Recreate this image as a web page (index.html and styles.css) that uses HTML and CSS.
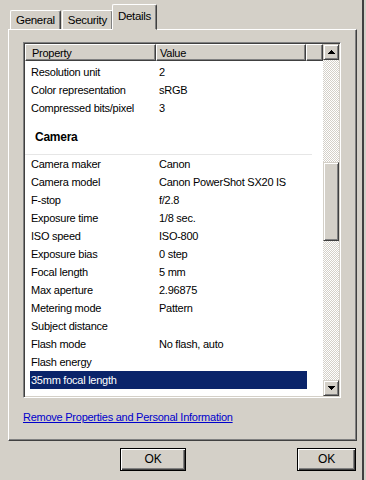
FILE: index.html
```html
<!DOCTYPE html>
<html>
<head>
<meta charset="utf-8">
<link rel="stylesheet" href="styles.css">
</head>
<body>
<div class="dialog">
  <div class="tabs">
    <div class="tab">General</div>
    <div class="tab">Security</div>
    <div class="tab active">Details</div>
  </div>
  <div class="panel">
    <div class="listview">
      <div class="lv-main">
        <div class="lv-header">
          <div class="hcell c1">Property</div>
          <div class="hcell c2">Value</div>
          <div class="hcell c3"></div>
        </div>
        <div class="lv-body">
          <div class="row"><span class="k">Resolution unit</span><span class="v">2</span></div>
          <div class="row"><span class="k">Color representation</span><span class="v">sRGB</span></div>
          <div class="row"><span class="k">Compressed bits/pixel</span><span class="v">3</span></div>
          <div class="group"><span>Camera</span></div>
          <div class="row"><span class="k">Camera maker</span><span class="v">Canon</span></div>
          <div class="row"><span class="k">Camera model</span><span class="v">Canon PowerShot SX20 IS</span></div>
          <div class="row"><span class="k">F-stop</span><span class="v">f/2.8</span></div>
          <div class="row"><span class="k">Exposure time</span><span class="v">1/8 sec.</span></div>
          <div class="row"><span class="k">ISO speed</span><span class="v">ISO-800</span></div>
          <div class="row"><span class="k">Exposure bias</span><span class="v">0 step</span></div>
          <div class="row"><span class="k">Focal length</span><span class="v">5 mm</span></div>
          <div class="row"><span class="k">Max aperture</span><span class="v">2.96875</span></div>
          <div class="row"><span class="k">Metering mode</span><span class="v">Pattern</span></div>
          <div class="row"><span class="k">Subject distance</span><span class="v"></span></div>
          <div class="row"><span class="k">Flash mode</span><span class="v">No flash, auto</span></div>
          <div class="row"><span class="k">Flash energy</span><span class="v"></span></div>
          <div class="row selected"><span class="k">35mm focal length</span><span class="v"></span></div>
        </div>
      </div>
      <div class="scrollbar">
        <div class="sb-btn"><svg width="7" height="4" viewBox="0 0 7 4"><path d="M3 0h1v1h1v1h1v1h1v1H0V3h1V2h1V1h1z" fill="#000"/></svg></div>
        <div class="sb-track sb-top"></div>
        <div class="sb-thumb"></div>
        <div class="sb-track sb-bottom"></div>
        <div class="sb-btn"><svg width="7" height="4" viewBox="0 0 7 4"><path d="M0 0h7v1H6v1H5v1H4v1H3V3H2V2H1V1H0z" fill="#000"/></svg></div>
      </div>
    </div>
    <a class="link" href="#">Remove Properties and Personal Information</a>
  </div>
  <div class="buttons">
    <div class="btn b1">OK</div>
    <div class="btn b2">OK</div>
  </div>
</div>
</body>
</html>
```
FILE: styles.css
```css
html, body {
  margin: 0;
  padding: 0;
  background: #d4d0c8;
}
body {
  width: 366px;
  height: 480px;
  overflow: hidden;
  font-family: "Liberation Sans", Arial, sans-serif;
  font-size: 11px;
  letter-spacing: -0.25px;
  color: #000;
}
.dialog {
  height: 480px;
  width: 364px;
  display: flex;
  flex-direction: column;
  border-right: 2px solid #404040;
  box-sizing: border-box;
}
.tabs {
  display: flex;
  align-items: flex-end;
  height: 29px;
  padding-left: 10px;
  box-sizing: border-box;
  position: relative;
  z-index: 2;
}
.tab {
  height: 19px;
  line-height: 18px;
  padding: 0 5px;
  border-top: 1px solid #fff;
  border-left: 1px solid #fff;
  border-right: 1px solid #404040;
  box-shadow: inset -1px 0 0 #808080;
  border-radius: 2px 2px 0 0;
  font-size: 11.5px;
  letter-spacing: -0.3px;
  box-sizing: border-box;
}
.tab + .tab { margin-left: 1px; }
.tab.active {
  margin-left: -1px;
  padding: 0 5px;
  border-bottom: 1px solid #d4d0c8;
  margin-bottom: -1px;
  height: 26px;
  line-height: 22px;
  background: #d4d0c8;
}
.panel {
  margin-left: 8px;
  width: 349px;
  height: 412px;
  box-sizing: border-box;
  border-top: 1px solid #fff;
  border-left: 1px solid #fff;
  border-right: 1px solid #404040;
  border-bottom: 1px solid #404040;
  box-shadow: inset -1px -1px 0 #808080;
  padding: 12px 0 0 14px;
  display: flex;
  flex-direction: column;
}
.listview {
  width: 318px;
  height: 356px;
  box-sizing: border-box;
  border-top: 1px solid #808080;
  border-left: 1px solid #808080;
  border-right: 1px solid #fff;
  border-bottom: 1px solid #fff;
  box-shadow: inset 1px 1px 0 #404040, inset -1px -1px 0 #d4d0c8;
  padding: 1px;
  display: flex;
  background: #fff;
}
.lv-main {
  flex: 1;
  display: flex;
  flex-direction: column;
  overflow: hidden;
}
.lv-header {
  display: flex;
  height: 17px;
  flex: none;
  background: #d4d0c8;
}
.hcell {
  box-sizing: border-box;
  height: 17px;
  line-height: 16px;
  padding-left: 6px;
  border-top: 1px solid #fff;
  border-left: 1px solid #fff;
  border-right: 1px solid #404040;
  border-bottom: 1px solid #404040;
  box-shadow: inset -1px -1px 0 #808080;
  white-space: nowrap;
  overflow: hidden;
}
.c1 { width: 131px; }
.c2 { width: 150px; padding-left: 3px; }
.c3 { flex: 1; }
.lv-body {
  flex: 1;
  padding: 2px 0 0 5px;
  overflow: hidden;
}
.row {
  height: 18px;
  line-height: 18px;
  display: flex;
  white-space: nowrap;
}
.row .k { width: 128px; padding-left: 1px; }
.row .v { flex: 1; }
.row.selected {
  background: #0a246a;
  color: #fff;
  width: 277px;
}
.group {
  height: 38px;
  box-sizing: border-box;
  border-bottom: 1px solid #e6e6e6;
  margin-left: -5px;
  padding-left: 10px;
  width: 287px;
  line-height: 40px;
  font-weight: bold;
  font-size: 12px;
}
.scrollbar {
  width: 16px;
  display: flex;
  flex-direction: column;
  flex: none;
}
.sb-btn {
  width: 16px;
  height: 16px;
  box-sizing: border-box;
  background: #d4d0c8;
  border-top: 1px solid #d4d0c8;
  border-left: 1px solid #d4d0c8;
  border-right: 1px solid #404040;
  border-bottom: 1px solid #404040;
  box-shadow: inset 1px 1px 0 #fff, inset -1px -1px 0 #808080;
  display: flex;
  align-items: center;
  justify-content: center;
}
.sb-track {
  background-color: #fff;
  background-image: conic-gradient(#d4d0c8 25%, #fff 0 50%, #d4d0c8 0 75%, #fff 0);
  background-size: 2px 2px;
}
.sb-top { height: 102px; }
.sb-bottom { flex: 1; }
.sb-thumb {
  height: 79px;
  box-sizing: border-box;
  background: #d4d0c8;
  border-top: 1px solid #d4d0c8;
  border-left: 1px solid #d4d0c8;
  border-right: 1px solid #404040;
  border-bottom: 1px solid #404040;
  box-shadow: inset 1px 1px 0 #fff, inset -1px -1px 0 #808080;
}
.link {
  margin-top: 13px;
  color: #0000cc;
  text-decoration: underline;
  font-size: 11px;
  white-space: nowrap;
}
.buttons {
  display: flex;
  padding-top: 7px;
  padding-left: 120px;
}
.btn {
  width: 66px;
  height: 23px;
  box-sizing: border-box;
  border: 1px solid #000;
  box-shadow: inset 1px 1px 0 #fff, inset -1px -1px 0 #404040, inset -2px -2px 0 #808080;
  text-align: center;
  line-height: 20px;
  font-size: 12px;
}
.b2 { margin-left: 111px; width: 59px; }
```
